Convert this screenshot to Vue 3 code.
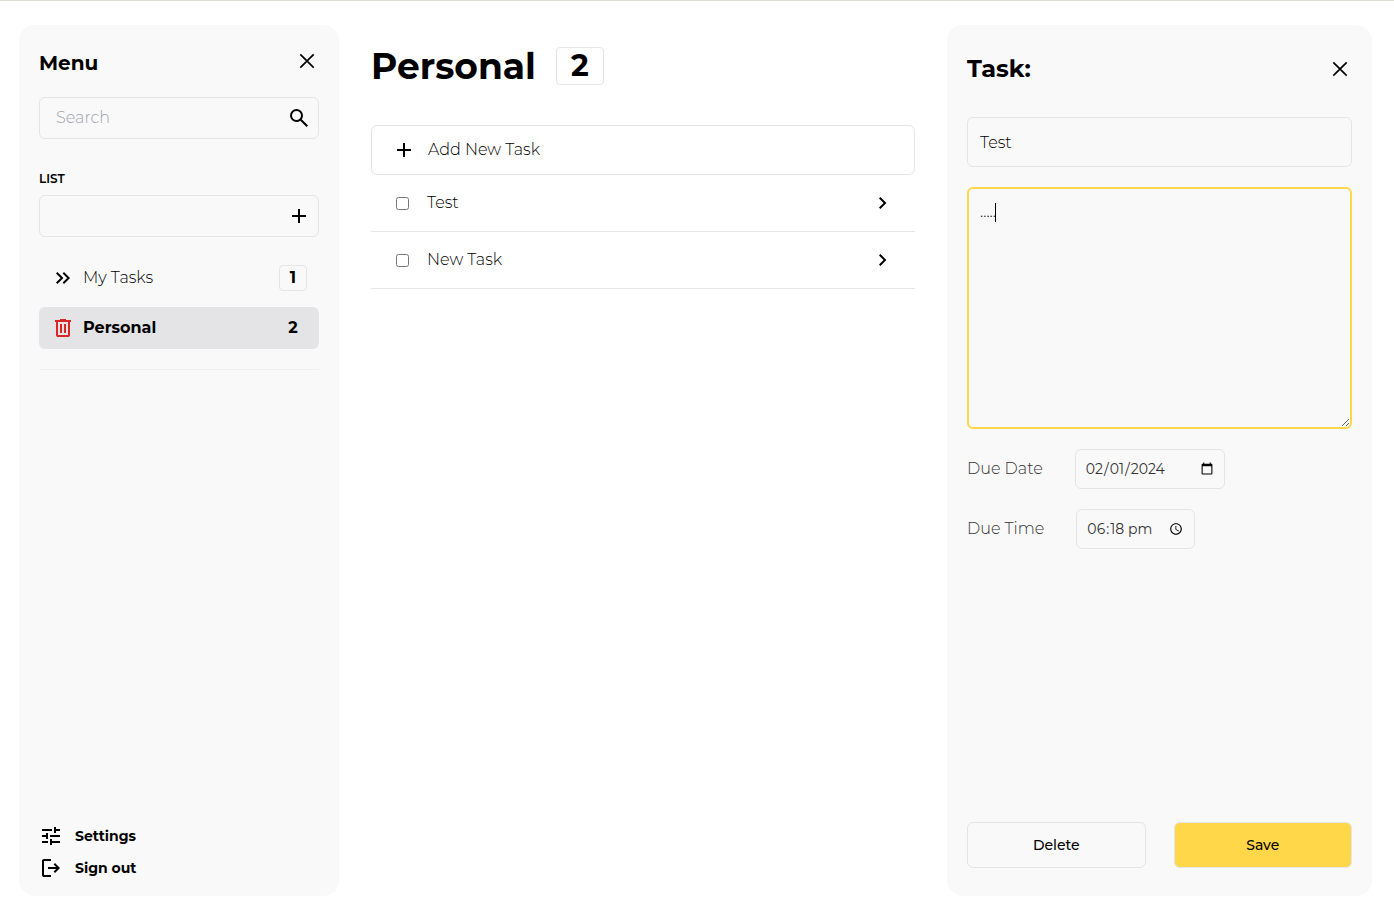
<script setup>
import { computed, onMounted, ref } from 'vue'

const search = ref('')
const newList = ref('')
const active = ref('Personal')
const lists = ref([
  { name: 'My Tasks', count: 1 },
  { name: 'Personal', count: 2 },
])
const tasks = ref([
  { id: 1, title: 'Test', done: false },
  { id: 2, title: 'New Task', done: false },
])
const current = computed(() => lists.value.find((l) => l.name === active.value))

const title = ref('Test')
const notes = ref('.....')
const dueDate = ref('2024-02-01')
const dueTime = ref('18:18')
const notesBox = ref(null)

onMounted(() => {
  const box = notesBox.value
  box.focus()
  box.setSelectionRange(box.value.length, box.value.length)
})
</script>

<template>
  <div class="app">
    <aside class="panel sidebar">
      <header class="sidebar-head">
        <h2 class="menu-title">Menu</h2>
        <button class="icon-btn" type="button" aria-label="Close menu">
          <svg viewBox="0 0 24 24"><path class="line" d="M5.3 5.3 18.7 18.7M18.7 5.3 5.3 18.7" /></svg>
        </button>
      </header>

      <div class="field">
        <input v-model="search" type="text" placeholder="Search" aria-label="Search" />
        <button class="icon-btn" type="button" aria-label="Run search">
          <svg viewBox="0 0 24 24"><path d="m19.6 21-6.3-6.3q-.75.6-1.725.95Q10.6 16 9.5 16q-2.725 0-4.612-1.888Q3 12.225 3 9.5q0-2.725 1.888-4.613Q6.775 3 9.5 3q2.725 0 4.613 1.887Q16 6.775 16 9.5q0 1.1-.35 2.075-.35.975-.95 1.725l6.3 6.3ZM9.5 14q1.875 0 3.188-1.312Q14 11.375 14 9.5q0-1.875-1.312-3.188Q11.375 5 9.5 5 7.625 5 6.312 6.312 5 7.625 5 9.5q0 1.875 1.312 3.188Q7.625 14 9.5 14Z" /></svg>
        </button>
      </div>

      <label class="list-label" for="new-list">LIST</label>
      <div class="field">
        <input id="new-list" v-model="newList" type="text" />
        <button class="icon-btn" type="button" aria-label="Add list">
          <svg viewBox="0 0 24 24"><path d="M11 19v-6H5v-2h6V5h2v6h6v2h-6v6Z" /></svg>
        </button>
      </div>

      <nav class="lists">
        <button
          v-for="list in lists"
          :key="list.name"
          type="button"
          class="list-row"
          :class="{ active: list.name === active }"
          @click="active = list.name"
        >
          <svg v-if="list.name === active" class="trash" viewBox="0 0 24 24"><path d="M7 21q-.825 0-1.412-.587Q5 19.825 5 19V6H4V4h5V3h6v1h5v2h-1v13q0 .825-.587 1.413Q17.825 21 17 21ZM17 6H7v13h10ZM9 17h2V8H9Zm4 0h2V8h-2Z" /></svg>
          <svg v-else viewBox="0 0 24 24"><path d="M6.4 18 5 16.6 9.6 12 5 7.4 6.4 6l6 6Zm6.6 0-1.4-1.4 4.6-4.6-4.6-4.6L13 6l6 6Z" /></svg>
          <span class="list-name">{{ list.name }}</span>
          <span class="badge">{{ list.count }}</span>
        </button>
      </nav>

      <footer class="sidebar-foot">
        <a class="foot-link" href="#settings">
          <svg viewBox="0 0 24 24"><path d="M11 21v-6h2v2h8v2h-8v2Zm-8-2v-2h6v2Zm4-4v-2H3v-2h4V9h2v6Zm4-2v-2h10v2Zm4-4V3h2v2h4v2h-4v2ZM3 7V5h10v2Z" /></svg>
          Settings
        </a>
        <a class="foot-link" href="#sign-out">
          <svg viewBox="0 0 24 24"><path d="M5 21q-.825 0-1.412-.587Q3 19.825 3 19V5q0-.825.588-1.413Q4.175 3 5 3h7v2H5v14h7v2Zm11-4-1.375-1.45 2.55-2.55H9v-2h8.175l-2.55-2.55L16 7l5 5Z" /></svg>
          Sign out
        </a>
      </footer>
    </aside>

    <main class="main">
      <header class="main-head">
        <h1 class="list-title">{{ current.name }}</h1>
        <span class="total">{{ current.count }}</span>
      </header>

      <button class="add" type="button">
        <svg viewBox="0 0 24 24"><path d="M11 19v-6H5v-2h6V5h2v6h6v2h-6v6Z" /></svg>
        Add New Task
      </button>

      <ul class="tasks">
        <li v-for="task in tasks" :key="task.id" class="task">
          <input :id="'task-' + task.id" v-model="task.done" type="checkbox" />
          <label :for="'task-' + task.id">{{ task.title }}</label>
          <button class="icon-btn" type="button" :aria-label="'Open ' + task.title">
            <svg viewBox="0 0 24 24"><path d="M9.4 18 8 16.6l4.6-4.6L8 7.4 9.4 6l6 6Z" /></svg>
          </button>
        </li>
      </ul>
    </main>

    <form class="panel detail" @submit.prevent>
      <header class="detail-head">
        <h2 class="detail-title">Task:</h2>
        <button class="icon-btn" type="button" aria-label="Close task">
          <svg viewBox="0 0 24 24"><path class="line" d="M5.3 5.3 18.7 18.7M18.7 5.3 5.3 18.7" /></svg>
        </button>
      </header>

      <input v-model="title" class="box title-input" type="text" aria-label="Title" />
      <div class="notes-wrap">
        <textarea ref="notesBox" v-model="notes" class="box notes" aria-label="Description" spellcheck="false"></textarea>
        <div class="caret-layer" aria-hidden="true"><span class="ghost" :style="{ width: notes.length + 'ch' }"></span></div>
      </div>

      <div class="due">
        <label for="due-date">Due Date</label>
        <input id="due-date" v-model="dueDate" class="box picker date" type="date" />
      </div>
      <div class="due">
        <label for="due-time">Due Time</label>
        <input id="due-time" v-model="dueTime" class="box picker time" type="time" />
      </div>

      <footer class="actions">
        <button class="box action" type="button">Delete</button>
        <button class="box action save" type="submit">Save</button>
      </footer>
    </form>
  </div>
</template>

<style>
body {
  margin: 0;
  background: #fff;
}
</style>

<style scoped>
.app,
.app * {
  box-sizing: border-box;
}

.app {
  display: grid;
  grid-template-columns: 320px minmax(0, 1fr) 425px;
  gap: 32px;
  min-height: 100vh;
  padding: 24px 22px 22px 19px;
  border-top: 1px solid #dde1d6;
  background: #fff;
  color: #000;
  font-family: Montserrat, Inter, "Liberation Sans", sans-serif;
  font-size: 16px;
  font-weight: 300;
  line-height: 24px;
}

h1,
h2,
ul {
  margin: 0;
  padding: 0;
}

button,
input,
textarea {
  margin: 0;
  color: inherit;
  font: inherit;
}

svg {
  display: block;
  flex: none;
  width: 24px;
  height: 24px;
  fill: currentColor;
}

.line {
  fill: none;
  stroke: currentColor;
  stroke-width: 1.7;
}

.icon-btn {
  display: flex;
  align-items: center;
  flex: none;
  width: 24px;
  height: 32px;
  padding: 0;
  border: 0;
  background: none;
}

.panel {
  display: flex;
  flex-direction: column;
  border-radius: 16px;
  background: #f9f9f9;
}

.sidebar {
  padding: 20px 20px 12px;
}

.sidebar-head {
  display: flex;
  justify-content: space-between;
  height: 52px;
}

.menu-title {
  font-size: 20px;
  font-weight: 700;
  line-height: 36px;
}

.field {
  display: flex;
  align-items: center;
  height: 42px;
  padding: 0 7px 0 16px;
  border: 1px solid #e5e5e7;
  border-radius: 6px;
}

.field input {
  flex: 1;
  min-width: 0;
  padding: 0;
  border: 0;
  outline: 0;
  background: none;
}

.field input::placeholder {
  color: #9ca3af;
}

.list-label {
  margin: 32px 0 8px;
  font-size: 12px;
  font-weight: 600;
  line-height: 16px;
}

.lists {
  display: flex;
  flex-direction: column;
  gap: 8px;
  padding: 20px 0;
  border-bottom: 1px solid #efeff0;
}

.list-row {
  display: flex;
  align-items: center;
  gap: 8px;
  height: 42px;
  padding: 0 12px;
  border: 0;
  border-radius: 6px;
  background: none;
  text-align: left;
}

.list-name {
  flex: 1;
}

.badge {
  width: 28px;
  height: 26px;
  border: 1px solid #e5e5e7;
  border-radius: 4px;
  font-weight: 700;
  text-align: center;
}

.active {
  background: #e4e4e6;
  font-weight: 700;
}

.active .badge {
  border-color: transparent;
}

.trash {
  color: #dc2626;
}

.sidebar-foot {
  margin-top: auto;
}

.foot-link {
  display: flex;
  align-items: center;
  gap: 12px;
  height: 32px;
  color: inherit;
  font-size: 14px;
  font-weight: 700;
  text-decoration: none;
}

.main-head {
  display: flex;
  align-items: center;
  gap: 20px;
  height: 82px;
  margin-bottom: 18px;
}

.list-title {
  font-size: 36px;
  font-weight: 700;
  line-height: 48px;
}

.total {
  width: 48px;
  height: 38px;
  border: 1px solid #e5e5e7;
  border-radius: 4px;
  font-size: 30px;
  font-weight: 700;
  line-height: 36px;
  text-align: center;
}

.add {
  display: flex;
  align-items: center;
  gap: 12px;
  width: 100%;
  height: 50px;
  padding: 0 20px;
  border: 1px solid #e5e5e7;
  border-radius: 6px;
  background: none;
}

.tasks {
  list-style: none;
}

.task {
  display: flex;
  align-items: center;
  gap: 18px;
  height: 57px;
  padding: 0 20px 0 25px;
  border-bottom: 1px solid #e5e5e7;
}

.task input {
  width: 13px;
  height: 13px;
}

.task label {
  flex: 1;
}

.detail {
  padding: 20px 20px 28px;
}

.detail-head {
  display: flex;
  align-items: center;
  justify-content: space-between;
  height: 48px;
  margin-bottom: 24px;
}

.detail-title {
  font-size: 24px;
  font-weight: 700;
}

.box {
  border: 1px solid #e5e5e7;
  border-radius: 6px;
  outline: 0;
  background: #f9f9f9;
}

.title-input {
  height: 50px;
  padding: 0 12px;
}

.notes-wrap {
  position: relative;
  margin: 20px 0;
}

.notes {
  display: block;
  width: 100%;
  height: 242px;
  padding: 12px;
  caret-color: transparent;
  resize: vertical;
}

.notes:focus {
  padding: 11px;
  border: 2px solid #ffd748;
}

.caret-layer {
  display: none;
  position: absolute;
  top: 13px;
  left: 13px;
  align-items: center;
  height: 24px;
  pointer-events: none;
}

.notes:focus + .caret-layer {
  display: flex;
}

.ghost {
  height: 19px;
  border-right: 1px solid #000;
  font-size: 5px;
}

.due {
  display: flex;
  align-items: center;
  gap: 32px;
  margin-bottom: 20px;
  color: #333;
}

.picker {
  height: 40px;
  padding: 0 8px 0 9px;
  color: #333;
  font-size: 14px;
  font-weight: 400;
}

.date {
  width: 150px;
}

.time {
  width: 119px;
}

.time::-webkit-datetime-edit-ampm-field {
  text-transform: lowercase;
}

.actions {
  display: grid;
  grid-template-columns: 1fr 1fr;
  gap: 28px;
  margin-top: auto;
}

.action {
  height: 46px;
  font-size: 14px;
  font-weight: 500;
}

.save {
  background: #ffd748;
}
</style>
